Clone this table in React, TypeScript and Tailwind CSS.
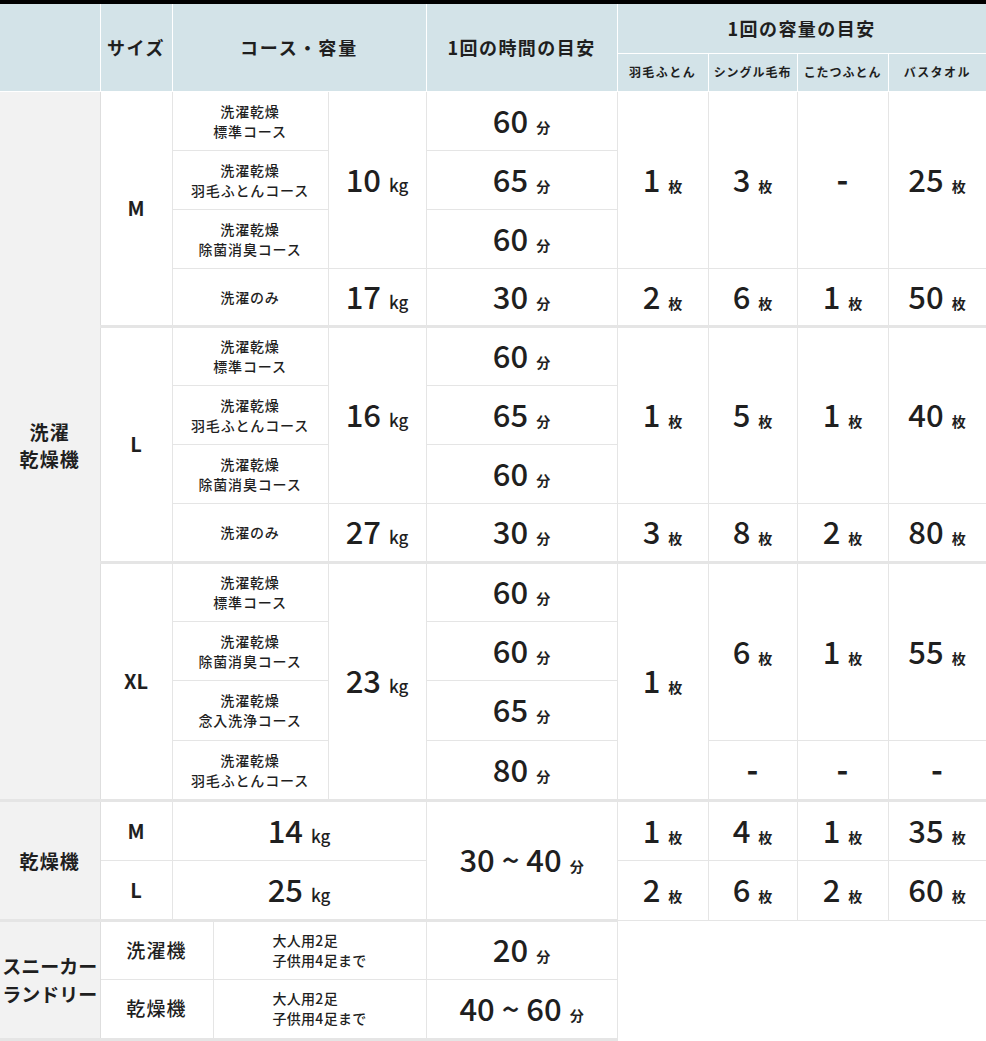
import React from "react";

const font = { fontFamily: '"Noto Sans CJK JP", "Noto Sans", sans-serif' };

const td = "border-r border-b border-[#e5e5e5] text-center align-middle p-0";
const sep = "border-t-[3px] border-t-[#e5e5e5]";
const th = "bg-[#d3e3e8] border-r border-b border-white text-center align-middle p-0 font-bold";
const side = "bg-[#f2f2f2] border-r border-b border-r-[#dedede] border-b-[#e5e5e5] text-center align-middle p-0 text-[19px] font-bold leading-[27px] tracking-[0.06em]";

function Num({ v, u }: { v: string; u: string }) {
  return (
    <span className="inline-flex items-baseline whitespace-nowrap">
      <span className="text-[31px] font-medium leading-none">{v}</span>
      <span className={u === "kg" ? "ml-2 text-[17px] font-medium leading-none" : "ml-2 text-[14px] font-bold leading-none"}>{u}</span>
    </span>
  );
}

function Dash() {
  return <span className="text-[32px] font-bold leading-none">-</span>;
}

function Course({ a, b }: { a: string; b?: string }) {
  return (
    <span className="block text-[14px] font-medium leading-[20px] tracking-[0.06em]">
      {a}
      {b && <br />}
      {b}
    </span>
  );
}

function Shoes() {
  return (
    <span className="inline-block text-left text-[14px] font-medium leading-[20px] tracking-[0.02em]">
      大人用2足<br />子供用4足まで
    </span>
  );
}

const size = "text-[20px] font-bold";

export default function App() {
  return (
    <div className="w-[986px] bg-white text-[#1f1f1f]" style={font}>
      <div className="h-[4px] bg-black" />
      <table className="w-[986px] table-fixed border-collapse">
        <colgroup>
          <col className="w-[100px]" />
          <col className="w-[72px]" />
          <col className="w-[41px]" />
          <col className="w-[115px]" />
          <col className="w-[98px]" />
          <col className="w-[191px]" />
          <col className="w-[91px]" />
          <col className="w-[89px]" />
          <col className="w-[91px]" />
          <col className="w-[98px]" />
        </colgroup>
        <thead>
          <tr className="h-[49px]">
            <th rowSpan={2} className={th} />
            <th rowSpan={2} className={`${th} text-[18px] tracking-[0.08em]`}>サイズ</th>
            <th rowSpan={2} colSpan={3} className={`${th} text-[18px] tracking-[0.1em]`}>コース・容量</th>
            <th rowSpan={2} className={`${th} text-[18px] tracking-[0.08em]`}>1回の時間の目安</th>
            <th colSpan={4} className={`${th} text-[18px] tracking-[0.08em]`}>1回の容量の目安</th>
          </tr>
          <tr className="h-[38px]">
            <th className={`${th} text-[12px] tracking-[0.12em]`}>羽毛ふとん</th>
            <th className={`${th} text-[12px] tracking-[0.08em]`}>シングル毛布</th>
            <th className={`${th} text-[12px] tracking-[0.08em]`}>こたつふとん</th>
            <th className={`${th} text-[12px] tracking-[0.12em] border-r-0`}>バスタオル</th>
          </tr>
        </thead>
        <tbody>
          {/* 洗濯乾燥機 M */}
          <tr className="h-[59px]">
            <td rowSpan={12} className={side}>洗濯<br />乾燥機</td>
            <td rowSpan={4} className={`${td} ${size}`}>M</td>
            <td colSpan={2} className={td}><Course a="洗濯乾燥" b="標準コース" /></td>
            <td rowSpan={3} className={td}><Num v="10" u="kg" /></td>
            <td className={td}><Num v="60" u="分" /></td>
            <td rowSpan={3} className={td}><Num v="1" u="枚" /></td>
            <td rowSpan={3} className={td}><Num v="3" u="枚" /></td>
            <td rowSpan={3} className={td}><Dash /></td>
            <td rowSpan={3} className={td}><Num v="25" u="枚" /></td>
          </tr>
          <tr className="h-[59px]">
            <td colSpan={2} className={td}><Course a="洗濯乾燥" b="羽毛ふとんコース" /></td>
            <td className={td}><Num v="65" u="分" /></td>
          </tr>
          <tr className="h-[59px]">
            <td colSpan={2} className={td}><Course a="洗濯乾燥" b="除菌消臭コース" /></td>
            <td className={td}><Num v="60" u="分" /></td>
          </tr>
          <tr className="h-[58px]">
            <td colSpan={2} className={td}><Course a="洗濯のみ" /></td>
            <td className={td}><Num v="17" u="kg" /></td>
            <td className={td}><Num v="30" u="分" /></td>
            <td className={td}><Num v="2" u="枚" /></td>
            <td className={td}><Num v="6" u="枚" /></td>
            <td className={td}><Num v="1" u="枚" /></td>
            <td className={td}><Num v="50" u="枚" /></td>
          </tr>

          {/* 洗濯乾燥機 L */}
          <tr className="h-[59px]">
            <td rowSpan={4} className={`${td} ${sep} ${size}`}>L</td>
            <td colSpan={2} className={`${td} ${sep}`}><Course a="洗濯乾燥" b="標準コース" /></td>
            <td rowSpan={3} className={`${td} ${sep}`}><Num v="16" u="kg" /></td>
            <td className={`${td} ${sep}`}><Num v="60" u="分" /></td>
            <td rowSpan={3} className={`${td} ${sep}`}><Num v="1" u="枚" /></td>
            <td rowSpan={3} className={`${td} ${sep}`}><Num v="5" u="枚" /></td>
            <td rowSpan={3} className={`${td} ${sep}`}><Num v="1" u="枚" /></td>
            <td rowSpan={3} className={`${td} ${sep}`}><Num v="40" u="枚" /></td>
          </tr>
          <tr className="h-[59px]">
            <td colSpan={2} className={td}><Course a="洗濯乾燥" b="羽毛ふとんコース" /></td>
            <td className={td}><Num v="65" u="分" /></td>
          </tr>
          <tr className="h-[59px]">
            <td colSpan={2} className={td}><Course a="洗濯乾燥" b="除菌消臭コース" /></td>
            <td className={td}><Num v="60" u="分" /></td>
          </tr>
          <tr className="h-[59px]">
            <td colSpan={2} className={td}><Course a="洗濯のみ" /></td>
            <td className={td}><Num v="27" u="kg" /></td>
            <td className={td}><Num v="30" u="分" /></td>
            <td className={td}><Num v="3" u="枚" /></td>
            <td className={td}><Num v="8" u="枚" /></td>
            <td className={td}><Num v="2" u="枚" /></td>
            <td className={td}><Num v="80" u="枚" /></td>
          </tr>

          {/* 洗濯乾燥機 XL */}
          <tr className="h-[59px]">
            <td rowSpan={4} className={`${td} ${sep} ${size}`}>XL</td>
            <td colSpan={2} className={`${td} ${sep}`}><Course a="洗濯乾燥" b="標準コース" /></td>
            <td rowSpan={4} className={`${td} ${sep}`}><Num v="23" u="kg" /></td>
            <td className={`${td} ${sep}`}><Num v="60" u="分" /></td>
            <td rowSpan={4} className={`${td} ${sep}`}><Num v="1" u="枚" /></td>
            <td rowSpan={3} className={`${td} ${sep}`}><Num v="6" u="枚" /></td>
            <td rowSpan={3} className={`${td} ${sep}`}><Num v="1" u="枚" /></td>
            <td rowSpan={3} className={`${td} ${sep}`}><Num v="55" u="枚" /></td>
          </tr>
          <tr className="h-[59px]">
            <td colSpan={2} className={td}><Course a="洗濯乾燥" b="除菌消臭コース" /></td>
            <td className={td}><Num v="60" u="分" /></td>
          </tr>
          <tr className="h-[60px]">
            <td colSpan={2} className={td}><Course a="洗濯乾燥" b="念入洗浄コース" /></td>
            <td className={td}><Num v="65" u="分" /></td>
          </tr>
          <tr className="h-[60px]">
            <td colSpan={2} className={td}><Course a="洗濯乾燥" b="羽毛ふとんコース" /></td>
            <td className={td}><Num v="80" u="分" /></td>
            <td className={td}><Dash /></td>
            <td className={td}><Dash /></td>
            <td className={td}><Dash /></td>
          </tr>

          {/* 乾燥機 */}
          <tr className="h-[60px]">
            <td rowSpan={2} className={`${side} ${sep}`}>乾燥機</td>
            <td className={`${td} ${sep} ${size}`}>M</td>
            <td colSpan={3} className={`${td} ${sep}`}><Num v="14" u="kg" /></td>
            <td rowSpan={2} className={`${td} ${sep}`}><Num v="30 ~ 40" u="分" /></td>
            <td className={`${td} ${sep}`}><Num v="1" u="枚" /></td>
            <td className={`${td} ${sep}`}><Num v="4" u="枚" /></td>
            <td className={`${td} ${sep}`}><Num v="1" u="枚" /></td>
            <td className={`${td} ${sep}`}><Num v="35" u="枚" /></td>
          </tr>
          <tr className="h-[60px]">
            <td className={`${td} ${size}`}>L</td>
            <td colSpan={3} className={td}><Num v="25" u="kg" /></td>
            <td className={td}><Num v="2" u="枚" /></td>
            <td className={td}><Num v="6" u="枚" /></td>
            <td className={td}><Num v="2" u="枚" /></td>
            <td className={td}><Num v="60" u="枚" /></td>
          </tr>

          {/* スニーカーランドリー */}
          <tr className="h-[59px]">
            <td rowSpan={2} className={`${side} ${sep} border-b-[3px] whitespace-nowrap leading-[28px] tracking-normal text-[17.5px]`}>スニーカー<br />ランドリー</td>
            <td colSpan={2} className={`${td} ${sep} text-[19px] font-medium tracking-[0.06em]`}>洗濯機</td>
            <td colSpan={2} className={`${td} ${sep}`}><Shoes /></td>
            <td className={`${td} ${sep}`}><Num v="20" u="分" /></td>
            <td rowSpan={2} colSpan={4} className="bg-white p-0" />
          </tr>
          <tr className="h-[60px]">
            <td colSpan={2} className={`${td} border-b-[3px] text-[19px] font-medium tracking-[0.06em]`}>乾燥機</td>
            <td colSpan={2} className={`${td} border-b-[3px]`}><Shoes /></td>
            <td className={`${td} border-b-[3px]`}><Num v="40 ~ 60" u="分" /></td>
          </tr>
        </tbody>
      </table>
    </div>
  );
}
